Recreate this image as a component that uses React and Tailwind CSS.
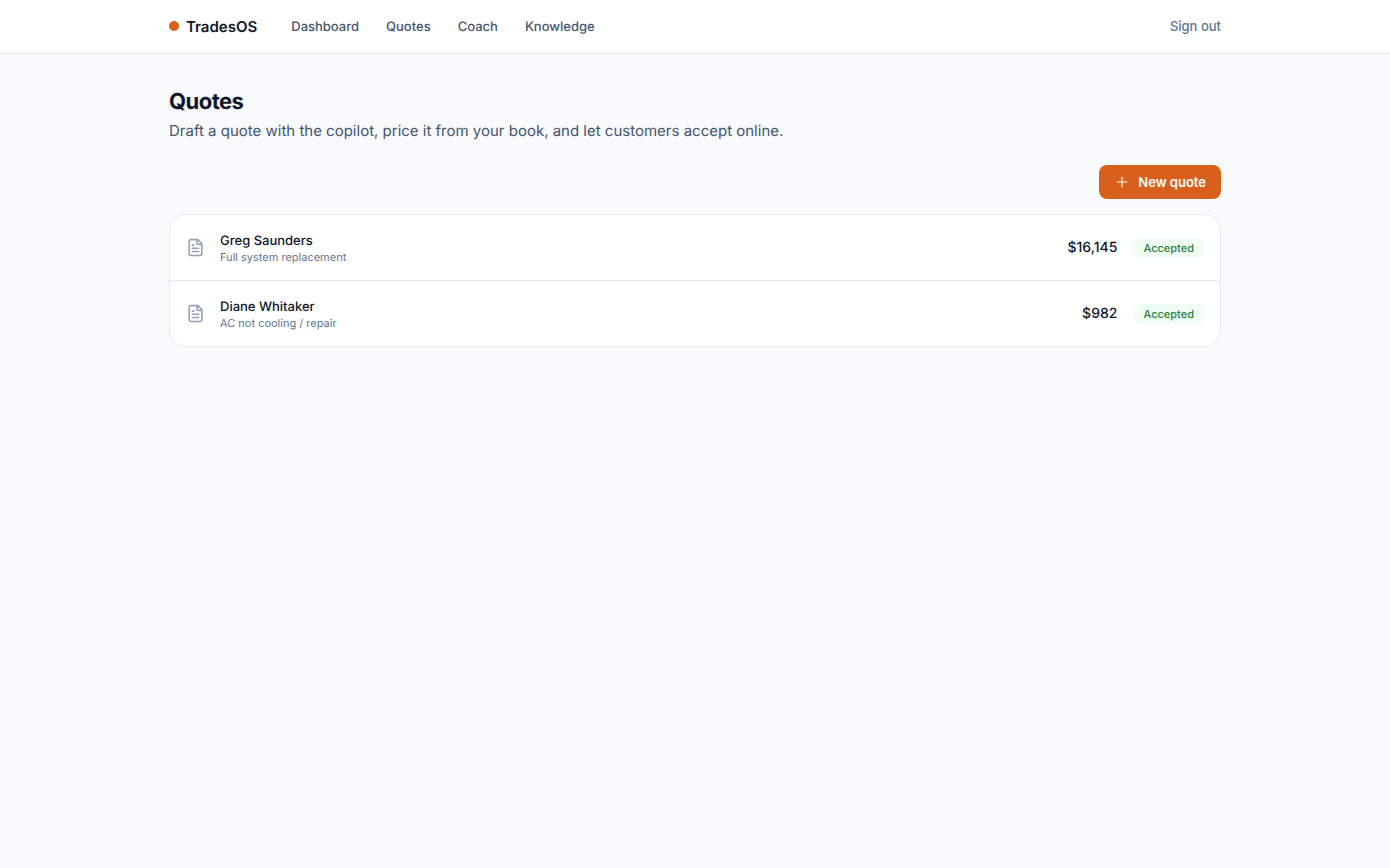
import { FileText, Plus } from 'lucide-react';

const links = [
  { label: 'Dashboard', href: '#dashboard' },
  { label: 'Quotes', href: '#quotes' },
  { label: 'Coach', href: '#coach' },
  { label: 'Knowledge', href: '#knowledge' },
];

const quotes = [
  { id: 1, customer: 'Greg Saunders', job: 'Full system replacement', total: 16145, status: 'Accepted' },
  { id: 2, customer: 'Diane Whitaker', job: 'AC not cooling / repair', total: 982, status: 'Accepted' },
];

function Header() {
  return (
    <header className="border-b border-[#e6eaf0] bg-white">
      <div className="mx-auto flex h-[53px] max-w-[1100px] items-center justify-between px-6">
        <div className="flex items-baseline gap-[34px]">
          <a href="#home" className="flex items-center gap-[7px] text-[15px] leading-[21px] font-semibold text-slate-900">
            <span className="h-[10px] w-[10px] rounded-full bg-[#d9601c]" />
            TradesOS
          </a>
          <nav className="flex items-center gap-[27px]">
            {links.map((link) => (
              <a
                key={link.label}
                href={link.href}
                className="text-[13px] leading-[19px] font-medium text-slate-600 hover:text-slate-900"
              >
                {link.label}
              </a>
            ))}
          </nav>
        </div>
        <button type="button" className="text-[13px] leading-[19px] font-medium text-slate-500 hover:text-slate-900">
          Sign out
        </button>
      </div>
    </header>
  );
}

function QuoteRow({ quote }) {
  return (
    <li>
      <a href={`#quote-${quote.id}`} className="flex items-center gap-[15px] py-[17px] pr-[15px] pl-4 hover:bg-slate-50">
        <FileText size={19} className="shrink-0 text-slate-400" />
        <div className="min-w-0 flex-1">
          <p className="truncate text-[13px] leading-[19px] font-medium text-slate-900">{quote.customer}</p>
          <p className="text-[11px] leading-[12px] text-slate-500">{quote.job}</p>
        </div>
        <span className="text-[14px] leading-[21px] font-medium text-slate-900">${quote.total.toLocaleString('en-US')}</span>
        <span className="rounded-full bg-green-50 px-[11px] py-[2px] text-[11px] leading-[16px] font-medium text-[#2b7d3a]">
          {quote.status}
        </span>
      </a>
    </li>
  );
}

export default function App() {
  return (
    <div className="min-h-screen bg-slate-50 font-['Inter',sans-serif] [text-rendering:geometricPrecision]">
      <Header />
      <main className="mx-auto max-w-[1100px] px-6 py-8">
        <h1 className="text-[22px] leading-[32px] font-bold tracking-tight text-slate-900">Quotes</h1>
        <p className="mt-[2px] text-[15px] leading-[22px] text-slate-600">
          Draft a quote with the copilot, price it from your book, and let customers accept online.
        </p>

        <div className="mt-[23px] flex justify-end">
          <button
            type="button"
            className="flex h-[34px] items-center gap-2 rounded-lg bg-[#d9601c] px-[15px] text-[13px] leading-[21px] font-semibold text-white hover:bg-[#c25416]"
          >
            <Plus size={16} strokeWidth={1.75} />
            New quote
          </button>
        </div>

        <ul className="mt-[15px] divide-y divide-[#e6eaf0] overflow-hidden rounded-2xl border border-[#e6eaf0] bg-white">
          {quotes.map((quote) => (
            <QuoteRow key={quote.id} quote={quote} />
          ))}
        </ul>
      </main>
    </div>
  );
}
